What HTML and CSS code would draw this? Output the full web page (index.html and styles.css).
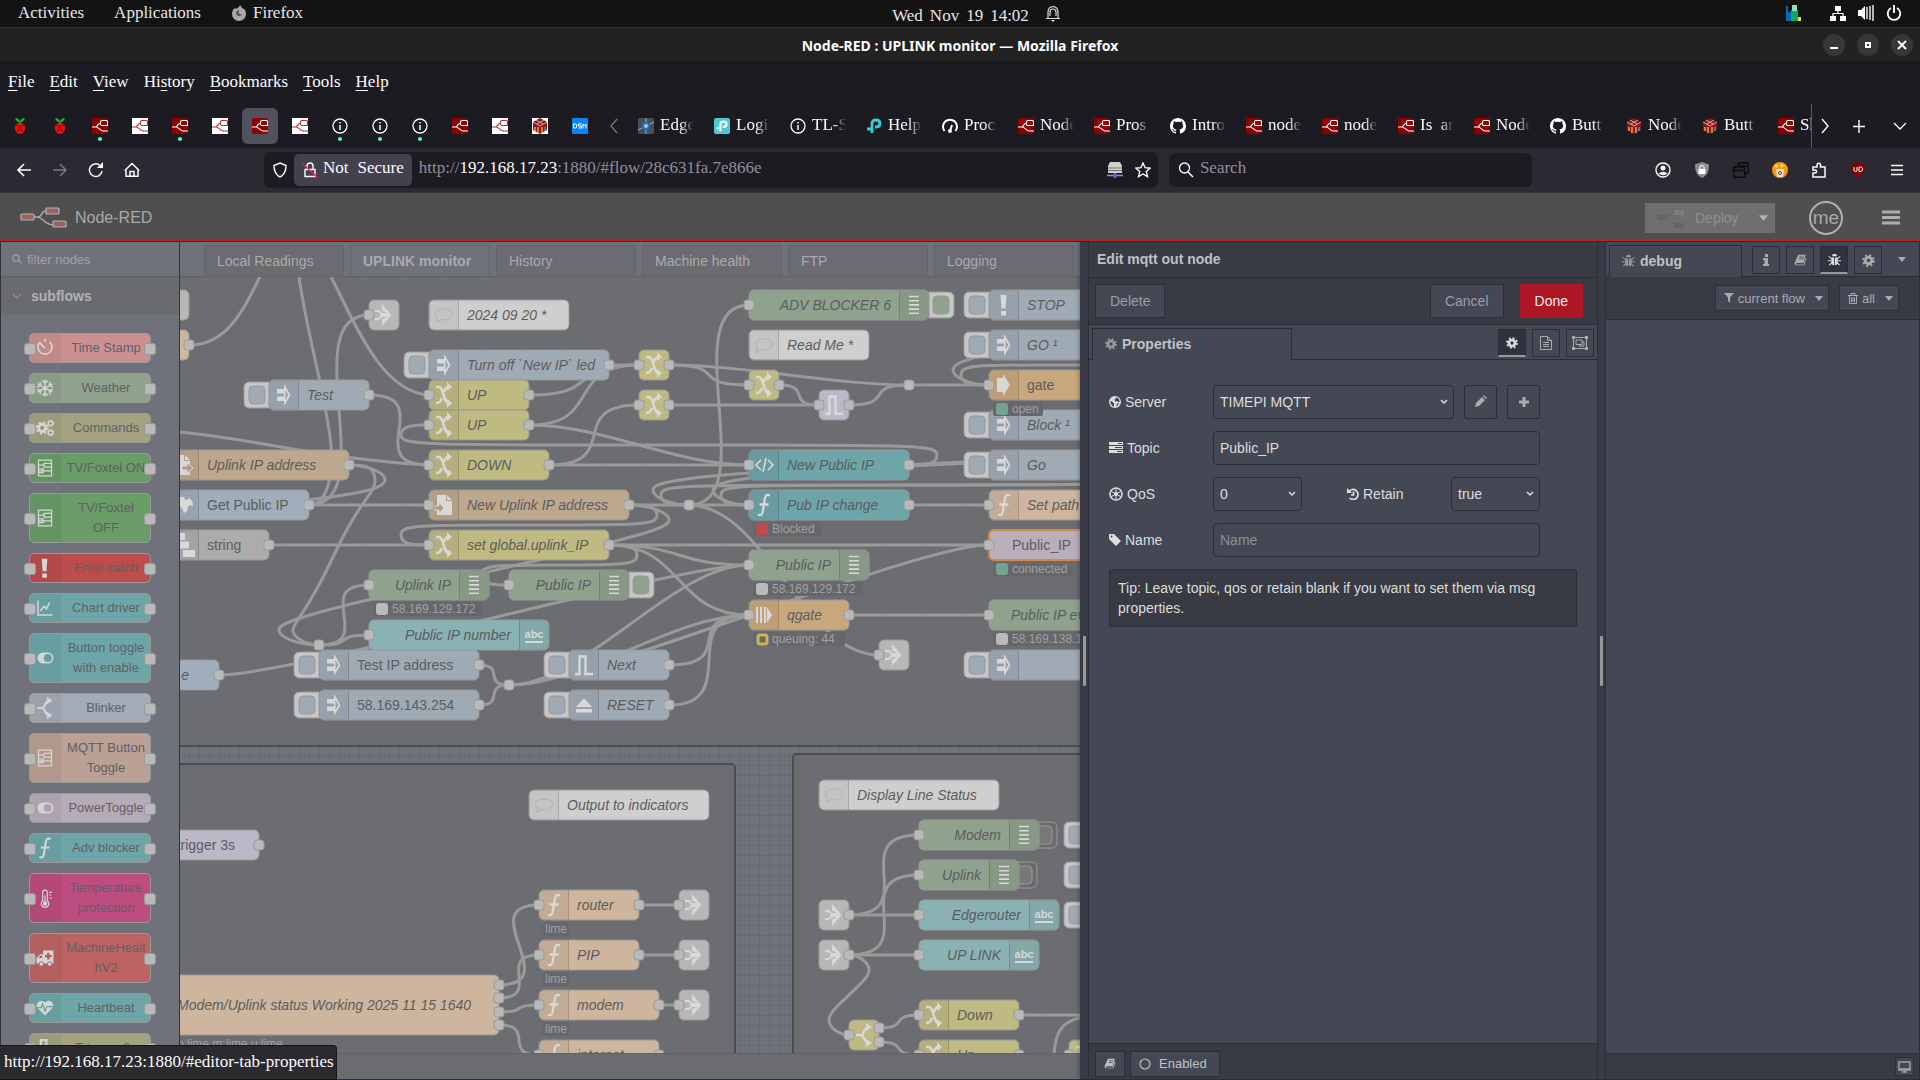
FILE: index.html
```html
<!DOCTYPE html>
<html lang="en">
<head>
    <meta charset="UTF-8">
    <meta name="viewport" content="width=device-width, initial-scale=1.0">
    <title>Node-RED : UPLINK monitor</title>
    <link rel="stylesheet" href="styles.css">
</head>
<body>
    <svg class="sprite" aria-hidden="true">
        <!-- browser icons -->
        <symbol id="pi" viewBox="0 0 16 16"><path d="M8 5C6 4 4 3 3 0c3 0 5 2 5 4 0-2 2-4 5-4-1 3-3 4-5 5z" fill="#1fb51f"/><path d="M8 5c3 0 5 2 5 5s-2 6-5 6-5-3-5-6 2-5 5-5z" fill="#f00f0f"/><circle cx="8" cy="10" r="2" fill="#900"/><path d="M4 8l2-1M12 8l-2-1M5 13l2 0M11 13l-2 0" stroke="#700" /></symbol>
        <symbol id="nr" viewBox="0 0 16 16"><rect width="16" height="16" rx="2" fill="#8f0000"/><g fill="none" stroke="#fff" stroke-width="1.1"><path d="M0 9h4c2-1 2-4 5-4M4 9c3 0 3 3 7 4h5"/><path d="M16 7.500h-6q-1.500 0-1.500-1.500V4q0-1.500 1.500-1.500h4q1.500 0 1.500 1.500v3"/></g></symbol>
        <symbol id="nrw" viewBox="0 0 16 16"><rect width="16" height="16" fill="#fff"/><g fill="none" stroke="#a33" stroke-width="1.1"><path d="M0 9h4c2-1 2-4 5-4M4 9c3 0 3 3 7 4h5"/><path d="M16 7.500h-6q-1.500 0-1.500-1.500V4q0-1.500 1.500-1.500h4q1.500 0 1.500 1.500v3"/></g></symbol>
        <symbol id="info" viewBox="0 0 16 16"><circle cx="8" cy="8" r="7" fill="none" stroke="#fbfbfe" stroke-width="1.3"/><path d="M8 7v5M8 4v1.600" stroke="#fbfbfe" stroke-width="1.500"/></symbol>
        <symbol id="box" viewBox="0 0 16 16"><path d="M8 0l7 4v8l-7 4-7-4V4z" fill="#8a1a1a"/><path d="M1 4l7 4 7-4M4 2l7 4M12 2L5 6" stroke="#e8a0a0" fill="none"/><path d="M3 9v4M6 9v6M10 9v6" stroke="#f0a040" stroke-width="1.500"/><path d="M13 9v4" stroke="#58d" stroke-width="1.500"/></symbol>
        <symbol id="dsm" viewBox="0 0 16 16"><rect width="16" height="16" rx="1" fill="#0a84ee"/><path d="M1.500 6h2q1 0 1 1v2q0 1-1 1h-2zM9.500 6h-3v2h3v2h-3M11 10.500V6l1.500 2L14 6v4.500" fill="none" stroke="#fff"/></symbol>
        <symbol id="edge" viewBox="0 0 16 16"><rect width="16" height="16" rx="2" fill="#4a4e56"/><circle cx="8" cy="8" r="4" fill="#2f6fb0"/><circle cx="8" cy="8" r="2" fill="#8cf"/><path d="M0 12l4-2M12 6l4-2M8 0v4M8 12v4" stroke="#6bf"/></symbol>
        <symbol id="tp" viewBox="0 0 16 16"><path d="M1 11h5V5q0-3 4-3t4 3.500-4 3.500H9M6 9v6" fill="none" stroke="currentColor" stroke-width="2.800"/></symbol>
        <symbol id="gauge" viewBox="0 0 16 16"><path d="M2.500 13a7 7 0 1 1 11 0M8 13l2-6" fill="none" stroke="#fff" stroke-width="2"/><circle cx="8" cy="13" r="2" fill="#fff"/></symbol>
        <symbol id="gh" viewBox="0 0 16 16"><path fill="#fff" d="M8 0C3.580 0 0 3.580 0 8c0 3.540 2.290 6.530 5.470 7.590.4.070.55-.17.55-.38 0-.19-.01-.82-.01-1.490-2.010.37-2.530-.49-2.690-.94-.09-.23-.48-.94-.82-1.130-.28-.15-.68-.52-.01-.53.63-.01 1.080.58 1.230.82.72 1.210 1.870.87 2.330.66.07-.52.28-.87.51-1.070-1.780-.2-3.640-.89-3.640-3.950 0-.87.31-1.590.82-2.150-.08-.2-.36-1.020.08-2.120 0 0 .67-.21 2.200.82.64-.18 1.320-.27 2-.27s1.360.09 2 .27c1.530-1.040 2.200-.82 2.200-.82.44 1.100.16 1.920.08 2.120.51.56.82 1.270.82 2.150 0 3.070-1.870 3.750-3.650 3.950.29.25.54.73.54 1.480 0 1.070-.01 1.930-.01 2.200 0 .21.15.46.55.38A8.010 8.010 0 0 0 16 8c0-4.420-3.580-8-8-8z"/></symbol>
        <!-- editor icons -->
        <symbol id="cog" viewBox="0 0 16 16"><circle cx="8" cy="8" r="4" fill="none" stroke="currentColor" stroke-width="3.600"/><circle cx="8" cy="8" r="6.600" fill="none" stroke="currentColor" stroke-width="2.400" stroke-dasharray="2.590 2.590"/></symbol>
        <symbol id="bug" viewBox="0 0 16 16"><path d="M5 4a3 3 0 0 1 6 0zM4 5.500h3.500V15C5 15 4 13 4 10zM12 5.500H8.500V15c2.500 0 3.500-2 3.500-5z" fill="currentColor"/><path d="M1 4l3 3M15 4l-3 3M0 9.500h4M16 9.500h-4M1.500 15L5 12M14.500 15L11 12" stroke="currentColor" stroke-width="1.300"/></symbol>
        <symbol id="book" viewBox="0 0 16 16"><path d="M5 1h10l-3 11H3q-1 0-1 1t1 1h9l3-9 1 1-3 9H3q-3 0-3-3z" fill="currentColor"/><path d="M6.500 4h6M6 6.500h6" stroke="#3c404b"/></symbol>
        <symbol id="caret" viewBox="0 0 10 6"><path d="M0 0h10L5 6z" fill="currentColor"/></symbol>
        <symbol id="search" viewBox="0 0 16 16"><circle cx="6.500" cy="6.500" r="5" fill="none" stroke="currentColor" stroke-width="2"/><path d="M10 10l5 5" stroke="currentColor" stroke-width="2"/></symbol>
        <symbol id="globe" viewBox="0 0 16 16"><circle cx="8" cy="8" r="8" fill="currentColor"/><path d="M9 1.500l4 2 1.500 4-2 .5-2-1.500-1.500 1L7 5l2-1zM2 6.500l3 1.500 2 2.500-1 4-2.500-2.500C2 10 1.500 8 2 6.500zM11 10l2.500-1-2 4-2 1z" fill="#434854"/></symbol>
        <!-- node icons, drawn on a 30x30 tile -->
        <symbol id="i-inject" viewBox="0 0 30 30"><path d="M8 9h7V4l6.500 11L15 26v-5H8v-4.500h7v-3H8z" fill="currentColor"/><path d="M16.500 10l3 5-3 5z" fill="#9aa4af"/></symbol>
        <symbol id="i-change" viewBox="0 0 30 30"><path d="M7 7h3c5 0 4 16 10 16M7 23c4 0 5-2 6-5M15 12c1-4 2-5 5-5" fill="none" stroke="currentColor" stroke-width="2.600"/><path d="M18 2l5 5-5 4zM18 19l5 4-5 5z" fill="currentColor"/></symbol>
        <symbol id="i-function" viewBox="0 0 30 30"><path d="M21 5.500c-4-2-5 1-5.500 5L14 20c-.500 5-2 6-5 4.500M10.500 14.500h9" fill="none" stroke="currentColor" stroke-width="2.300"/></symbol>
        <symbol id="i-comment" viewBox="0 0 30 30"><path d="M15 9c5 0 8.500 2.500 8.500 5.500S20 20 15 20c-1 0-2 0-3-.500C11 21 9 22 7 22c1-1 2-2 1.500-3.500C7 17 6.500 16 6.500 14.500 6.500 11.500 10 9 15 9z" fill="none" stroke="#b4b4b4" stroke-width="1.200"/></symbol>
        <symbol id="i-link" viewBox="0 0 30 30"><path d="M13 4l9.500 11L13 26v-6.500l5-2.500h-6v-4h6l-5-2.500z" fill="currentColor"/><path d="M6 11h2.500a4 4 0 0 1 0 8H6" fill="none" stroke="currentColor" stroke-width="2"/></symbol>
        <symbol id="i-debug" viewBox="0 0 30 30"><path d="M10 6.500h10M10 10.700h10M10 14.900h10M10 19.100h10M10 23.300h10" stroke="currentColor" stroke-width="1.600"/></symbol>
        <symbol id="i-bang" viewBox="0 0 30 30"><path d="M11.500 5h6l-1 13.500h-4zM12 21h5v4.500h-5z" fill="currentColor"/></symbol>
        <symbol id="i-arrow" viewBox="0 0 30 30"><path d="M8 8h6V4l7 11-7 11v-4H8z" fill="currentColor"/></symbol>
        <symbol id="i-queue" viewBox="0 0 30 30"><path d="M8 7v16M12 7v16M16 7v16" stroke="currentColor" stroke-width="2"/><path d="M18 7l5 8-5 8z" fill="currentColor"/></symbol>
        <symbol id="i-trigger" viewBox="0 0 30 30"><path d="M6 24h4.500V6.500h6V24H24" fill="none" stroke="currentColor" stroke-width="2.400"/></symbol>
        <symbol id="i-eject" viewBox="0 0 30 30"><path d="M15 8l8 9H7zM7 19h16v3.500H7z" fill="currentColor"/></symbol>
        <symbol id="i-code" viewBox="0 0 30 30"><path d="M12 10l-5 5 5 5M19 10l5 5-5 5M17 8l-3 14" fill="none" stroke="currentColor" stroke-width="1.600"/></symbol>
        <symbol id="i-filein" viewBox="0 0 30 30"><path d="M8 5h9v6h6v14H8zM18 5l5 5h-5z" fill="currentColor"/><path d="M5 16h5v-3.500l5 5.500-5 5.500V20H5z" fill="#b39a7f" stroke="currentColor"/></symbol>
        <symbol id="i-fileout" viewBox="0 0 30 30"><path d="M6 5h9v6h6v14H6zM16 5l5 5h-5z" fill="currentColor"/><path d="M13 16h5v-3.500l6 5.500-6 5.500V20h-5z" fill="#b39a7f" stroke="currentColor"/></symbol>
        <symbol id="i-globe" viewBox="0 0 30 30"><path d="M7 12c1-4 5-6 9-5l-1 2 3 1 2-2c3 2 4 5 4 8l-3-1-2 2-1 4-3 2-2-5-3-2-3-1z" fill="currentColor"/></symbol>
        <symbol id="i-list" viewBox="0 0 30 30"><path d="M8 3h8v7H8zM10 11.500h10v7H10zM14 20h12v7H14z" fill="currentColor"/></symbol>
        <symbol id="i-switch" viewBox="0 0 30 30"><path d="M7 15h5c3 0 3-8 8-8M12 15c3 0 3 8 8 8" fill="none" stroke="currentColor" stroke-width="2.400"/><path d="M17 3l6 4-6 4zM17 19l6 4-6 4z" fill="currentColor"/></symbol>
        <symbol id="i-clock" viewBox="0 0 30 30"><path d="M10 8.500a7.500 7.500 0 1 0 10 0M15 5v3M10 10l5 5" fill="none" stroke="currentColor" stroke-width="1.800"/></symbol>
        <symbol id="i-snow" viewBox="0 0 30 30"><path d="M15 6v18M7 10.500l16 9M7 19.500l16-9M12 7l3 3 3-3M12 23l3-3 3 3M6.500 14l4-1.500-1-4M23.500 14l-4-1.500 1-4M6.500 16.500l4 1.500-1 4M23.500 16.500l-4 1.500 1 4" fill="none" stroke="currentColor" stroke-width="1.500"/></symbol>
        <symbol id="i-cogs" viewBox="0 0 30 30"><circle cx="12" cy="15" r="3.800" fill="none" stroke="currentColor" stroke-width="3"/><circle cx="12" cy="15" r="6" fill="none" stroke="currentColor" stroke-width="2" stroke-dasharray="2.360 2.360"/><g fill="none" stroke="currentColor"><circle cx="21" cy="10" r="2.400" stroke-width="1.500"/><circle cx="21" cy="10" r="3.600" stroke-dasharray="1.410 1.410"/><circle cx="21" cy="20" r="2.400" stroke-width="1.500"/><circle cx="21" cy="20" r="3.600" stroke-dasharray="1.410 1.410"/></g></symbol>
        <symbol id="i-subflow" viewBox="0 0 30 30"><path d="M8 6.500h14v17H8zM8 12h6M18 10h-4v4h8v-4h-4M8 18h14M8 16h5v4H8" fill="none" stroke="currentColor" stroke-width="1.400"/></symbol>
        <symbol id="i-chart" viewBox="0 0 30 30"><path d="M7.500 7v15.500H23M10 18l4-5 2.500 3L20 9" fill="none" stroke="currentColor" stroke-width="1.700"/></symbol>
        <symbol id="i-toggle" viewBox="0 0 30 30"><path fill-rule="evenodd" d="M13 9h5a6 6 0 0 1 0 12h-5a6 6 0 0 1 0-12zM18 10.700a4.300 4.300 0 1 0 0 8.600 4.300 4.300 0 1 0 0-8.600z" fill="currentColor"/></symbol>
        <symbol id="i-thermo" viewBox="0 0 30 30"><path d="M12.500 18V9a2.500 2.500 0 0 1 5 0v9a4 4 0 1 1-5 0zM15 12v8M19.500 9h3M19.500 12h2M19.500 15h3" fill="none" stroke="currentColor" stroke-width="1.300"/><circle cx="15" cy="21" r="2.400" fill="currentColor"/></symbol>
        <symbol id="i-ambulance" viewBox="0 0 30 30"><path d="M13 7h11v14H6v-6l4-4h3zM8 15h4v-2.500h-2z" fill="currentColor" fill-rule="evenodd"/><path d="M18.500 9.500v7M15 13h7" stroke="#b95b5b" stroke-width="2.400"/><g fill="currentColor" stroke="#b95b5b"><circle cx="11" cy="21.500" r="2.400"/><circle cx="20" cy="21.500" r="2.400"/></g></symbol>
        <symbol id="i-heart" viewBox="0 0 30 30"><path d="M15 23l-8-8C4 10 10 4 15 9c5-5 11 1 8 6z" fill="currentColor"/><path d="M6 14.500h5l1.500-4 2.500 8 2-5h7" fill="none" stroke="#6ba0a4" stroke-width="1.300"/></symbol>
    </svg>

    <div class="desktop-bar">
        <div class="desktop-left"><span>Activities</span><span>Applications</span><span class="app">
            <svg width="16" height="16" viewBox="0 0 16 16"><path d="M8 2l1-2 2 3c3 1 4 3 4 6a7 7 0 0 1-14 0c0-3 1-5 3-6l1 1z" fill="#a8a8a8"/><path d="M8 5a3 3 0 1 0 3 4c-2 1-4 0-3-4z" fill="#555"/></svg>Firefox</span></div>
        <div class="clock"><span>Wed</span><span>Nov</span><span>19</span><span>14:02</span>
            <svg width="14" height="17" viewBox="0 0 14 17"><path d="M2 13V7q0-5 5-5.500 5 .500 5 5.500v6M0 13.500h14M4 11V7q0-3 3-3t3 3v4" fill="none" stroke="#ddd" stroke-width="1.200"/><path d="M5 15h4l-2 2z" fill="#ddd"/></svg></div>
        <div class="desktop-right">
            <svg class="load" width="16" height="16" viewBox="0 0 16 16"><path d="M0 1h2v6h3v9H0z" fill="#0a6ab0"/><path d="M5 5h7v11H5z" fill="#0aa860"/><path d="M6 0h5v6H6z" fill="#8fe0b8"/><path d="M12 12h3v4h-3z" fill="#f0e040"/></svg>
            <svg width="16" height="16" viewBox="0 0 16 16" fill="#fff"><path d="M5 1h6v5H5zM0 11h6v5H0zM10 11h6v5h-6z"/><path d="M8 6v3M3 11V8.500h10V11" fill="none" stroke="#fff" stroke-width="1.200"/></svg>
            <svg width="16" height="16" viewBox="0 0 16 16"><path d="M0 5h3l4-4v14l-4-4H0z" fill="#fff"/><path d="M9 2v12M12 1v14M15 0v16" stroke="#ddd" stroke-width="1.600"/></svg>
            <svg width="16" height="16" viewBox="0 0 16 16"><path d="M5 3a6.300 6.300 0 1 0 6 0M8 0v8" fill="none" stroke="#fff" stroke-width="1.900"/></svg>
        </div>
    </div>
    <div class="title-bar">
        <span>Node-RED : UPLINK monitor — Mozilla Firefox</span>
        <div class="win-buttons">
            <button aria-label="Minimize"><svg width="10" height="10" viewBox="0 0 10 10"><path d="M1 8h8" stroke="#fff" stroke-width="2"/></svg></button>
            <button aria-label="Maximize"><svg width="10" height="10" viewBox="0 0 10 10"><path d="M3 3h4v4H3z" fill="none" stroke="#fff" stroke-width="2"/></svg></button>
            <button aria-label="Close"><svg width="10" height="10" viewBox="0 0 10 10"><path d="M1 1l8 8M9 1L1 9" stroke="#fff" stroke-width="2"/></svg></button>
        </div>
    </div>
    <nav class="menu-bar">
        <span><u>F</u>ile</span><span><u>E</u>dit</span><span><u>V</u>iew</span><span>Hi<u>s</u>tory</span><span><u>B</u>ookmarks</span><span><u>T</u>ools</span><span><u>H</u>elp</span>
    </nav>
    <div class="tab-strip">
        <div class="pinned">
            <span class="pin"><svg><use href="#pi"/></svg></span>
            <span class="pin"><svg><use href="#pi"/></svg></span>
            <span class="pin dot"><svg><use href="#nr"/></svg></span>
            <span class="pin"><svg><use href="#nrw"/></svg></span>
            <span class="pin dot"><svg><use href="#nr"/></svg></span>
            <span class="pin"><svg><use href="#nrw"/></svg></span>
            <span class="pin current"><svg><use href="#nr"/></svg></span>
            <span class="pin"><svg><use href="#nrw"/></svg></span>
            <span class="pin dot"><svg><use href="#info"/></svg></span>
            <span class="pin dot"><svg><use href="#info"/></svg></span>
            <span class="pin dot"><svg><use href="#info"/></svg></span>
            <span class="pin"><svg><use href="#nr"/></svg></span>
            <span class="pin"><svg><use href="#nrw"/></svg></span>
            <span class="pin white"><svg><use href="#box"/></svg></span>
            <span class="pin"><svg><use href="#dsm"/></svg></span>
        </div>
        <svg class="scroll-left" viewBox="0 0 16 16"><path d="M11 1L5 8l6 7" fill="none" stroke="#77767d" stroke-width="1.300"/></svg>
        <div class="tabs">
            <span class="tab"><svg><use href="#edge"/></svg><b>Edge</b></span>
            <span class="tab"><svg class="tp-tile"><use href="#tp"/></svg><b>Login</b></span>
            <span class="tab"><svg><use href="#info"/></svg><b>TL-S</b></span>
            <span class="tab"><svg class="tp"><use href="#tp"/></svg><b>Help</b></span>
            <span class="tab"><svg><use href="#gauge"/></svg><b>Proc</b></span>
            <span class="tab"><svg><use href="#nr"/></svg><b>Node</b></span>
            <span class="tab"><svg><use href="#nr"/></svg><b>Pros</b></span>
            <span class="tab"><svg><use href="#gh"/></svg><b>Intro</b></span>
            <span class="tab"><svg><use href="#nr"/></svg><b>node</b></span>
            <span class="tab"><svg><use href="#nr"/></svg><b>node</b></span>
            <span class="tab"><svg><use href="#nr"/></svg><b>Is &nbsp;an</b></span>
            <span class="tab"><svg><use href="#nr"/></svg><b>Node</b></span>
            <span class="tab"><svg><use href="#gh"/></svg><b>Butt</b></span>
            <span class="tab"><svg><use href="#box"/></svg><b>Node</b></span>
            <span class="tab"><svg><use href="#box"/></svg><b>Butt</b></span>
            <span class="tab"><svg><use href="#nr"/></svg><b>Sh</b></span>
        </div>
        <div class="tab-tools">
            <svg viewBox="0 0 16 16"><path d="M5 1l6 7-6 7" fill="none" stroke="#fbfbfe" stroke-width="1.400"/></svg>
            <svg viewBox="0 0 16 16"><path d="M8 2v13M2 8.500h12" stroke="#fbfbfe" stroke-width="1.400"/></svg>
            <svg class="list-tabs" viewBox="0 0 16 16"><path d="M2 5l6 6 6-6" fill="none" stroke="#fbfbfe" stroke-width="1.400"/></svg>
        </div>
    </div>
    <div class="nav-bar">
        <div class="nav-buttons">
            <svg viewBox="0 0 16 16"><path d="M15 8H2M8 2L2 8l6 6" fill="none" stroke="#fbfbfe" stroke-width="1.600"/></svg>
            <svg viewBox="0 0 16 16"><path d="M1 8h13M8 2l6 6-6 6" fill="none" stroke="#7a7980" stroke-width="1.500"/></svg>
            <svg viewBox="0 0 16 16"><path d="M14 9A6.300 6.300 0 1 1 12 3.500" fill="none" stroke="#fbfbfe" stroke-width="1.500"/><path d="M15 0v6H9z" fill="#fbfbfe"/></svg>
            <svg viewBox="0 0 16 16"><path d="M2 8v6.200h12V8M.8 8.500L8 1.500l7.200 7M6 14V9.500h4V14" fill="none" stroke="#fbfbfe" stroke-width="1.500"/></svg>
        </div>
        <div class="url-bar">
            <svg viewBox="0 0 16 16"><path d="M8 1l6 2.500C14 9 12 13 8 15 4 13 2 9 2 3.500z" fill="none" stroke="#fbfbfe" stroke-width="1.400"/></svg>
            <span class="chip"><svg viewBox="0 0 16 16"><path d="M3 7.500h10v7H3zM5 7V4q0-3 3-3t3 3v3" fill="none" stroke="#fbfbfe" stroke-width="1.400"/><path d="M1 2l14 13" stroke="#e22850" stroke-width="1.500"/></svg><span>Not</span><span>Secure</span></span>
            <span class="url">http://<em>192.168.17.23</em>:1880/#flow/28c631fa.7e866e</span>
            <svg viewBox="0 0 16 16"><path d="M3 0h10l2 4v7H1V4z" fill="#d0d0d0"/><path d="M1 6h14M1 8.500h14" stroke="#777"/><path d="M0 13.500h16" stroke="#999" stroke-width="1.500"/><path d="M6.500 11h3v5h-3z" fill="#3a78e0"/></svg>
            <svg viewBox="0 0 16 16"><path d="M8 1l2.100 4.700 5 .500-3.800 3.400 1.200 5.100L8 12l-4.500 2.700 1.200-5.100L.9 6.200l5-.5z" fill="none" stroke="#fbfbfe" stroke-width="1.400"/></svg>
        </div>
        <label class="search-box"><svg viewBox="0 0 16 16"><circle cx="6.500" cy="6" r="5" fill="none" stroke="#fbfbfe" stroke-width="1.400"/><path d="M10 10l5 5" stroke="#fbfbfe" stroke-width="1.500"/></svg><input type="text" placeholder="Search" aria-label="Search"></label>
        <div class="ext-buttons">
            <svg viewBox="0 0 16 16"><circle cx="8" cy="8" r="7" fill="none" stroke="#fbfbfe" stroke-width="1.400"/><circle cx="8" cy="6" r="2.500" fill="#fbfbfe"/><path d="M3.500 11.500Q8 8 12.500 11.500 8 15 3.500 11.500" fill="#fbfbfe"/></svg>
            <svg viewBox="0 0 16 16"><path d="M8 0l7 2.500c0 7-2 11-7 13.500C3 13.500 1 9.500 1 2.500z" fill="#8e8e92"/><path d="M4.500 7h7v5h-7z" fill="#fff"/><path d="M6 7V5q0-1.500 2-1.500T10 5v2" fill="none" stroke="#fff"/></svg>
            <svg viewBox="0 0 16 16"><path d="M5 1h10.500v10H12M5 1v3M5 4h10M.7 5h11v10.300H.7zM1 8.500h10" fill="none" stroke="#0c0c0d" stroke-width="1.400"/></svg>
            <svg viewBox="0 0 16 16"><circle cx="8" cy="8" r="8" fill="#f59a12"/><path d="M4 7h8l-1 8H5z" fill="#eadfc8"/><circle cx="4.500" cy="4" r="1.500" fill="#ffe08a"/><circle cx="10" cy="3.500" r="1.500" fill="#ffe08a"/><circle cx="8" cy="11" r="1.500" fill="none" stroke="#555"/></svg>
            <svg viewBox="0 0 16 16"><path d="M2 15V11h2q1.500 0 1.500-1.500T4 8H2V5h4V3q0-1.800 1.800-1.800T9.500 3v2H14v10z" fill="none" stroke="#fbfbfe" stroke-width="1.500"/></svg>
            <svg viewBox="0 0 16 16"><path d="M8 0q3 2 7 2c0 7-2 11-7 14C3 13 1 9 1 2q4 0 7-2z" fill="#800000"/><path d="M4 5v3q0 1.500 1.500 1.500T7 8V5M9 5h1.500q2 0 2 2.200t-2 2.300H9z" fill="none" stroke="#fff"/></svg>
            <svg viewBox="0 0 16 16"><path d="M2 3.500h12M2 8h12M2 12.500h12" stroke="#fbfbfe" stroke-width="1.400"/></svg>
        </div>
    </div>

    <header class="red-header">
        <svg width="47" height="22" viewBox="0 0 47 22"><path d="M14 10h3c7 0 3-6 9-6M17 10c7 0 6 8 17 8" fill="none" stroke="#a9a9a9" stroke-width="1.500"/><g fill="#9b6262" stroke="#b5b5b5" stroke-width="1.200"><rect x="1" y="7" width="13" height="6" rx="1"/><rect x="26" y="1" width="13" height="6" rx="1"/><rect x="33" y="14" width="13" height="6" rx="1"/></g></svg>
        <span class="brand">Node-RED</span>
        <button class="deploy"><svg width="28" height="20" viewBox="0 0 28 20"><path d="M0 7h10v5H0z" fill="#646464"/><path d="M17 2h10v5H17z" fill="#7d7d7d"/><path d="M17 15h10v5H17z" fill="#646464"/><path d="M10 9l7-5" stroke="#646464"/></svg>Deploy<svg class="car"><use href="#caret"/></svg></button>
        <span class="avatar">me</span>
        <svg class="burger" width="18" height="15" viewBox="0 0 18 15"><path d="M0 2h18M0 7.500h18M0 13h18" stroke="#adadad" stroke-width="3"/></svg>
    </header>

    <main class="editor">
        <aside class="palette">
            <div class="palette-search"><svg width="10" height="10"><use href="#search"/></svg><input type="text" placeholder="filter nodes" aria-label="filter nodes"></div>
            <h3 class="palette-head"><svg width="8" height="6" viewBox="0 0 8 6"><path d="M0 1l4 4 4-4" fill="none" stroke="#a0a1a3"/></svg>subflows</h3>
            <div class="palette-list">
                <div class="pnode stamp"><svg><use href="#i-clock"/></svg><span>Time Stamp</span></div>
                <div class="pnode sage"><svg><use href="#i-snow"/></svg><span>Weather</span></div>
                <div class="pnode olive"><svg><use href="#i-cogs"/></svg><span>Commands</span></div>
                <div class="pnode green"><svg><use href="#i-subflow"/></svg><span>TV/Foxtel&nbsp;ON</span></div>
                <div class="pnode green"><svg><use href="#i-subflow"/></svg><span>TV/Foxtel<br>OFF</span></div>
                <div class="pnode red"><svg><use href="#i-bang"/></svg><span>Error catch</span></div>
                <div class="pnode teal"><svg><use href="#i-chart"/></svg><span>Chart driver</span></div>
                <div class="pnode teal"><svg><use href="#i-toggle"/></svg><span>Button toggle with enable</span></div>
                <div class="pnode steel"><svg><use href="#i-switch"/></svg><span>Blinker</span></div>
                <div class="pnode clay"><svg><use href="#i-subflow"/></svg><span>MQTT Button Toggle</span></div>
                <div class="pnode mauve"><svg><use href="#i-toggle"/></svg><span>PowerToggle</span></div>
                <div class="pnode teal"><svg><use href="#i-function"/></svg><span>Adv blocker</span></div>
                <div class="pnode pink"><svg><use href="#i-thermo"/></svg><span>Temperature protection</span></div>
                <div class="pnode brick"><svg><use href="#i-ambulance"/></svg><span>MachineHealt<br>hV2</span></div>
                <div class="pnode teal"><svg><use href="#i-heart"/></svg><span>Heartbeat</span></div>
                <div class="pnode olive"><svg><use href="#i-trigger"/></svg><span>Trigger &nbsp;3s</span></div>
            </div>
        </aside>

        <section class="workspace">
            <div class="flow-tabs">
                <span>Local Readings</span><span class="current">UPLINK monitor</span><span>History</span><span>Machine health</span><span>FTP</span><span>Logging</span>
            </div>
            <svg class="canvas" id="canvas"></svg>
            <div class="workspace-footer"></div>
        </section>

        <div class="splitter"><i></i></div>
        <section class="tray">
            <h2>Edit mqtt out node</h2>
            <div class="tray-toolbar">
                <button class="btn">Delete</button>
                <button class="btn cancel">Cancel</button>
                <button class="btn done">Done</button>
            </div>
            <div class="side-tabs">
                <span class="side-tab wide"><svg width="12" height="12"><use href="#cog"/></svg>Properties</span>
                <button class="ico on" aria-label="Properties"><svg width="12" height="12"><use href="#cog"/></svg></button>
                <button class="ico" aria-label="Description"><svg width="12" height="14" viewBox="0 0 12 14"><path d="M.5.500h7l4 4v9H.500zM7.500.500v4h4M3 6.500h6M3 8.500h6M3 10.500h6" fill="none" stroke="currentColor"/></svg></button>
                <button class="ico" aria-label="Appearance"><svg width="16" height="14" viewBox="0 0 16 14"><path d="M1.500 1.500h13v11h-13zM4 4h6v4.500H4zM7 8.500V10h5V6h-2" fill="none" stroke="currentColor"/><path d="M0 0h3v3H0zM13 0h3v3h-3zM0 11h3v3H0zM13 11h3v3h-3z" fill="currentColor"/></svg></button>
            </div>
            <form class="tray-body">
                <div class="row">
                    <label for="server"><svg width="12" height="12"><use href="#globe"/></svg>Server</label>
                    <select id="server" class="grow"><option>TIMEPI MQTT</option></select>
                    <button type="button" class="sq" aria-label="Edit"><svg width="12" height="12" viewBox="0 0 12 12"><path d="M0 12l1-4 6-6 3 3-6 6zM8 1l1-1 3 3-1 1z" fill="currentColor"/></svg></button>
                    <button type="button" class="sq" aria-label="Add"><svg width="10" height="10" viewBox="0 0 10 10"><path d="M5 0v10M0 5h10" stroke="currentColor" stroke-width="3"/></svg></button>
                </div>
                <div class="row">
                    <label for="topic"><svg width="14" height="12" viewBox="0 0 14 12"><path d="M0 1.500h14M0 5.500h14M0 9.500h14" stroke="currentColor" stroke-width="3"/><path d="M9 1.500h4M6 5.500h7M8 9.500h5" stroke="#434854"/></svg>Topic</label>
                    <input id="topic" class="grow" type="text" value="Public_IP">
                </div>
                <div class="row">
                    <label for="qos"><svg width="14" height="14" viewBox="0 0 14 14"><circle cx="7" cy="7" r="6" fill="none" stroke="currentColor" stroke-width="1.600"/><circle cx="7" cy="7" r="2" fill="currentColor"/><path d="M7 2v10M2.500 4.500l9 5M2.500 9.500l9-5" stroke="currentColor"/></svg>QoS</label>
                    <select id="qos" class="short"><option>0</option></select>
                    <label for="retain" class="retain"><svg width="12" height="12" viewBox="0 0 12 12"><path d="M2 3.500A5 5 0 1 1 2.500 10M6.500 3.500V7H4" fill="none" stroke="currentColor" stroke-width="1.700"/><path d="M0 0v5h5z" fill="currentColor"/></svg>Retain</label>
                    <select id="retain" class="short"><option>true</option></select>
                </div>
                <div class="row">
                    <label for="name"><svg width="12" height="12" viewBox="0 0 12 12"><path d="M0 0h5l7 7-5 5-7-7zM1.500 2.500a1 1 0 1 0 2 0 1 1 0 1 0-2 0" fill="currentColor" fill-rule="evenodd"/></svg>Name</label>
                    <input id="name" class="grow" type="text" placeholder="Name">
                </div>
                <p class="tip">Tip: Leave topic, qos or retain blank if you want to set them via msg properties.</p>
            </form>
            <div class="tray-footer">
                <button class="foot-btn" aria-label="Help"><svg width="12" height="11"><use href="#book"/></svg></button>
                <button class="foot-btn"><svg width="12" height="12" viewBox="0 0 12 12"><circle cx="6" cy="6" r="5" fill="none" stroke="currentColor" stroke-width="1.200"/></svg>Enabled</button>
            </div>
        </section>

        <div class="splitter second"><i></i></div>
        <aside class="sidebar">
            <div class="side-tabs">
                <span class="side-tab"><svg width="13" height="13"><use href="#bug"/></svg>debug</span>
                <button class="ico" aria-label="Info"><svg width="6" height="12" viewBox="0 0 6 12"><path d="M2 0h3v3H2zM0 4h5v6h1v2H0v-2h1.500V6H0z" fill="currentColor"/></svg></button>
                <button class="ico" aria-label="Help"><svg width="13" height="12"><use href="#book"/></svg></button>
                <button class="ico on" aria-label="Debug"><svg width="13" height="13"><use href="#bug"/></svg></button>
                <button class="ico" aria-label="Config"><svg width="13" height="13"><use href="#cog"/></svg></button>
                <svg class="more" width="8" height="5"><use href="#caret"/></svg>
            </div>
            <div class="debug-toolbar">
                <button class="filter"><svg width="10" height="10" viewBox="0 0 10 10"><path d="M0 0h10L6 4.500V10L4 8V4.500z" fill="currentColor"/></svg>current flow<svg class="end" width="8" height="5"><use href="#caret"/></svg></button>
                <button class="filter"><svg width="10" height="11" viewBox="0 0 10 11"><path d="M0 2.500h10M3 2V.500h4V2M1.500 3v7.500h7V3M3.500 4.500V9M5 4.500V9M6.500 4.500V9" fill="none" stroke="currentColor"/></svg>all<svg class="end" width="8" height="5"><use href="#caret"/></svg></button>
            </div>
            <div class="debug-body"></div>
            <div class="debug-footer"><button aria-label="Open in new window"><svg width="13" height="12" viewBox="0 0 13 12"><path d="M1 1h11v8H1zM1 8h11M4 11h5M6.500 9v2" fill="none" stroke="#9da0a5" stroke-width="1.500"/></svg></button></div>
        </aside>
    </main>
    <div class="status-link">http://192.168.17.23:1880/#editor-tab-properties</div>
    <script src="flow.js"></script>
</body>
</html>
```
FILE: styles.css
```css
* {
    box-sizing: border-box;
}
body {
    margin: 0;
    height: 100vh;
    display: flex;
    flex-direction: column;
    overflow: hidden;
    background: #1c1b22;
    color: #fbfbfe;
    font: 17px "Liberation Serif", serif;
}
button, input, select {
    font: inherit;
    color: inherit;
    margin: 0;
}
button {
    padding: 0;
    border: 0;
    background: none;
}
svg {
    flex: none;
}
.sprite {
    position: absolute;
    width: 0;
    height: 0;
}

/* desktop */
.desktop-bar {
    height: 28px;
    flex: none;
    display: grid;
    grid-template-columns: 1fr auto 1fr;
    align-items: center;
    background: #131313;
    border-bottom: 1px solid #333;
    color: #e6e6e6;
    line-height: 24px;
}
.desktop-left {
    display: flex;
    gap: 30px;
    padding: 0 0 2px 18px;
}
.desktop-left .app {
    display: flex;
    align-items: center;
    gap: 6px;
}
.clock {
    display: flex;
    align-items: center;
    gap: 7px;
    padding: 4px 0 0 32px;
}
.clock svg {
    margin: -6px 0 0 10px;
}
.desktop-right {
    display: flex;
    justify-content: flex-end;
    gap: 12px;
    padding: 0 18px 2px 0;
}
.load {
    margin-right: 16px;
}
.title-bar {
    height: 35px;
    flex: none;
    display: flex;
    align-items: center;
    justify-content: center;
    background: #222;
    border-bottom: 1px solid #151515;
    position: relative;
    font: bold 14px "Noto Sans", sans-serif;
}
.win-buttons {
    position: absolute;
    right: 7px;
    top: 6px;
    display: flex;
    gap: 12px;
}
.win-buttons button {
    width: 22px;
    height: 22px;
    border-radius: 50%;
    background: #373737;
    display: flex;
    align-items: center;
    justify-content: center;
}
.menu-bar {
    height: 41px;
    flex: none;
    display: flex;
    gap: 15px;
    padding: 0 8px;
    line-height: 38px;
}
.menu-bar u {
    text-underline-offset: 3px;
}
.tab-strip {
    height: 44px;
    flex: none;
    display: flex;
    align-items: center;
}
.tab-strip svg {
    width: 16px;
    height: 16px;
}
.pinned {
    display: flex;
}
.pin {
    width: 36px;
    height: 36px;
    margin: 0 2px;
    border-radius: 6px;
    display: flex;
    align-items: center;
    justify-content: center;
    position: relative;
}
.pin.current {
    background: #52525e;
}
.pin.dot::after {
    content: "";
    position: absolute;
    left: 16px;
    bottom: 3px;
    width: 4px;
    height: 4px;
    border-radius: 50%;
    background: #54ffbd;
}
.pin.white svg {
    background: #fff;
}
.scroll-left {
    margin: 0 16px 0 6px;
}
.tabs {
    flex: 1;
    min-width: 0;
    display: flex;
    overflow: hidden;
    height: 44px;
    border-right: 1px solid #5b5a62;
}
.tab {
    flex: none;
    width: 76px;
    display: flex;
    align-items: center;
    gap: 6px;
}
.tab b {
    font-weight: normal;
    width: 34px;
    padding-bottom: 3px;
    overflow: hidden;
    white-space: nowrap;
    -webkit-mask-image: linear-gradient(90deg, #000 60%, transparent);
    mask-image: linear-gradient(90deg, #000 60%, transparent);
}
.tab .tp {
    color: #2fd0d8;
}
.tab .tp-tile {
    color: #fff;
    background: #4acbd6;
    border-radius: 2px;
    padding: 2px;
}
.tab-tools {
    display: flex;
    gap: 18px;
    padding: 0 12px 0 5px;
}
.list-tabs {
    margin-left: 7px;
}
.nav-bar {
    height: 45px;
    flex: none;
    display: flex;
    align-items: center;
    background: #2b2a33;
    border-bottom: 1px solid #38373f;
}
.nav-bar svg {
    width: 16px;
    height: 16px;
}
.nav-buttons {
    width: 264px;
    flex: none;
    display: flex;
    gap: 20px;
    padding-left: 16px;
}
.url-bar {
    flex: 896;
    height: 36px;
    display: flex;
    align-items: center;
    padding: 0 7px 0 8px;
    border-radius: 6px;
    background: #1c1b22;
}
.chip {
    height: 32px;
    margin: 0 7px 0 6px;
    padding: 0 8px;
    display: flex;
    align-items: center;
    gap: 5px;
    border-radius: 5px;
    background: #42414d;
}
.chip span + span {
    margin-left: 4px;
}
.chip span, .url {
    padding-bottom: 4px;
}
.url {
    flex: 1;
    color: #8f8f9a;
}
.url em {
    font-style: normal;
    color: #fbfbfe;
}
.url + svg {
    margin-right: 12px;
}
.search-box {
    flex: 361;
    height: 34px;
    margin-left: 11px;
    display: flex;
    align-items: center;
    gap: 6px;
    padding-left: 9px;
    border-radius: 6px;
    background: #1c1b22;
}
.search-box input {
    flex: 1;
    min-width: 0;
    border: 0;
    padding: 0 0 4px;
    background: none;
}
.search-box input::placeholder {
    color: #8f8f9a;
}
.ext-buttons {
    width: 388px;
    flex: none;
    display: flex;
    justify-content: flex-end;
    gap: 23px;
    padding-right: 15px;
}

/* node-red header */
.red-header {
    height: 48px;
    flex: none;
    display: flex;
    align-items: center;
    padding: 3px 20px 0;
    background: #4f4f4f;
    border-bottom: 2px solid #c02020;
    color: #a9a9a9;
    font: 16px "Liberation Sans", Arial, sans-serif;
}
.brand {
    flex: 1;
    padding: 1px 0 0 8px;
}
.deploy {
    width: 130px;
    height: 30px;
    display: flex;
    align-items: center;
    gap: 10px;
    padding-left: 12px;
    background: #6f6f6f;
    color: #8f8f8f;
    font-size: 14px;
}
.deploy .car {
    width: 9px;
    height: 6px;
    margin-left: 10px;
    color: #b4b4b4;
}
.avatar {
    width: 34px;
    height: 34px;
    margin: 0 39px 0 34px;
    border: 2px solid #b0b0b0;
    border-radius: 50%;
    text-align: center;
    font-size: 19px;
    line-height: 29px;
}

.editor {
    flex: 1;
    min-height: 0;
    display: flex;
    border-top: 1px solid #2b2e38;
    border-bottom: 1px solid #2b2e38;
    background: #383b45;
    font: 14px "Liberation Sans", Arial, sans-serif;
}

/* palette */
.palette {
    width: 180px;
    flex: none;
    overflow: hidden;
    border: solid #30333b;
    border-width: 0 1px;
    background: #70727b;
    color: #a0a1a3;
}
.palette-search {
    height: 35px;
    display: flex;
    align-items: center;
    gap: 5px;
    padding-left: 11px;
    border-bottom: 1px solid #626367;
}
.palette-search input {
    width: 140px;
    padding: 0;
    border: 0;
    background: none;
    font-size: 13px;
}
.palette-search input::placeholder {
    color: #a0a1a3;
}
.palette-head {
    height: 38px;
    margin: 0;
    display: flex;
    align-items: center;
    gap: 10px;
    padding-left: 12px;
    background: #6a6b6f;
    color: #b0b1b2;
    font-size: 14px;
}
.palette-list {
    display: flex;
    flex-direction: column;
    gap: 10px;
    padding: 18px 28px 0;
}
.pnode {
    flex: none;
    display: flex;
    align-items: center;
    min-height: 30px;
    position: relative;
    border: 1px solid #999;
    border-radius: 5px;
    color: #606163;
    font-size: 13px;
    line-height: 20px;
    text-align: center;
    background-image: linear-gradient(90deg, rgba(0, 0, 0, .05) 30px, rgba(0, 0, 0, .15) 30px, transparent 31px);
}
.pnode svg {
    width: 30px;
    height: 28px;
    color: #d5d5d5;
}
.pnode span {
    flex: 1;
    padding: 4px 0 4px 2px;
}
.pnode::before, .pnode::after {
    content: "";
    position: absolute;
    top: calc(50% - 5px);
    width: 10px;
    height: 10px;
    border: 1px solid #999;
    border-radius: 3px;
    background: #b9b9b9;
}
.pnode::before {
    left: -6px;
}
.pnode::after {
    right: -6px;
}
.stamp { background-color: #cc9090; }
.sage { background-color: #90a28e; }
.olive { background-color: #a3a381; }
.green { background-color: #699c67; }
.red { background-color: #bc4d4d; }
.teal { background-color: #6ea5a9; }
.steel { background-color: #a2abb7; }
.clay { background-color: #baa095; }
.mauve { background-color: #b7abb7; }
.pink { background-color: #bd4c80; }
.brick { background-color: #bd6463; }

/* workspace */
.workspace {
    flex: 1;
    min-width: 0;
    display: flex;
    flex-direction: column;
    background: #6b6c70;
}
.flow-tabs {
    height: 35px;
    flex: none;
    display: flex;
    align-items: flex-end;
    gap: 6px;
    padding-left: 24px;
    overflow: hidden;
    background: #70727b;
    border-bottom: 1px solid #626367;
    color: #a9aaab;
}
.flow-tabs span {
    width: 140px;
    flex: none;
    height: 31px;
    padding-left: 12px;
    border: 1px solid #626468;
    border-bottom: 0;
    background: #6b6c70;
    line-height: 30px;
}
.flow-tabs .current {
    background: #70727b;
    font-weight: bold;
}
.canvas {
    flex: 1;
    width: 100%;
    min-height: 0;
    background: #70727b;
}
.workspace-footer {
    height: 26px;
    flex: none;
    border-top: 1px solid #626367;
}
.grid-line { stroke: #686a72; fill: none; }
.group { fill: #6b6c70; fill-opacity: .94; stroke: #4b4c4e; stroke-width: 2; }
.wire { fill: none; stroke: #999a9a; stroke-width: 3; }
.port { fill: #b9b9b9; stroke: #999; }
.body { stroke: #999; }
.body.selected { stroke: #d0874b; stroke-width: 2; }
.shade { fill: #000; fill-opacity: .05; }
.divider { stroke: #000; stroke-opacity: .15; }
.glyph { color: #d8d8d8; }
.label { fill: #5c5d5f; font-size: 14px; }
.italic { font-style: italic; }
.right { text-anchor: end; }
.abc { fill: #d8d8d8; font-size: 11px; font-weight: bold; text-anchor: middle; }
.button { fill: #c6c6c6; stroke: #999; }
.button.off { fill: #6b6c70; }
.status-bg { fill: #66676b; }
.status-text { fill: #a0a1a1; font-size: 12px; }

/* edit tray */
.splitter {
    width: 9px;
    flex: none;
    display: flex;
    align-items: center;
    justify-content: center;
    background: #383b45;
    border-right: 1px solid #2b2e38;
    box-shadow: -1px 0 4px rgba(0, 0, 0, .3);
}
.splitter i {
    width: 3px;
    height: 50px;
    border-radius: 1px;
    background: #999;
}
.splitter.second {
    border-left: 1px solid #2b2e38;
    box-shadow: none;
}
.tray {
    width: 508px;
    flex: none;
    display: flex;
    flex-direction: column;
    background: #434854;
    color: #ddd;
}
.tray h2 {
    height: 36px;
    flex: none;
    margin: 0;
    padding-left: 8px;
    border-bottom: 1px solid #2b2e38;
    background: #383b44;
    color: #c0c1c3;
    font-size: 14px;
    line-height: 34px;
}
.tray-toolbar {
    height: 47px;
    flex: none;
    display: flex;
    align-items: center;
    padding: 0 14px 0 6px;
    border-bottom: 1px solid #2b2e38;
    background: #383b44;
}
.btn {
    height: 34px;
    padding: 0 14px;
    border: 1px solid #2b2e38;
    background: #434854;
    color: #9b9da2;
}
.btn.cancel {
    margin-left: auto;
    margin-right: 16px;
}
.btn.done {
    border-color: #ad1625;
    background: #ad1625;
    color: #eee;
}
.side-tabs {
    height: 35px;
    flex: none;
    display: flex;
    align-items: flex-end;
    gap: 6px;
    padding: 0 3px;
    border-bottom: 1px solid #2b2e38;
    background: #434854;
}
.side-tab {
    width: 133px;
    height: 32px;
    margin: 0 auto -1px 0;
    display: flex;
    align-items: center;
    gap: 5px;
    padding: 0 0 2px 12px;
    border: 1px solid #2b2e38;
    border-bottom: 0;
    background: #434854;
    color: #c0c1c3;
    font-weight: bold;
}
.side-tab.wide {
    width: 200px;
}
.side-tab svg {
    color: #999;
}
.ico {
    width: 28px;
    height: 28px;
    margin-bottom: 2px;
    display: flex;
    align-items: center;
    justify-content: center;
    border: 1px solid #2b2e38;
    color: #aaa;
}
.ico.on {
    background: #30333d;
    border-bottom: 2px solid #999;
    color: #ddd;
}
.more {
    margin: 0 10px 14px;
    color: #aaa;
}
.tray-body {
    flex: 1;
    padding: 25px 20px 0;
}
.row {
    width: 431px;
    height: 34px;
    margin-bottom: 12px;
    display: flex;
    align-items: stretch;
    gap: 10px;
}
.row label {
    width: 94px;
    flex: none;
    display: flex;
    align-items: center;
    gap: 4px;
}
.row .retain {
    margin-left: auto;
}
.row input, .row select {
    min-width: 0;
    height: 34px;
    padding: 0 6px;
    border: 1px solid #2b2e38;
    border-radius: 4px;
    background: #434854;
    appearance: none;
}
.row input::placeholder {
    color: #8b8e95;
}
.row select {
    background: #434854 url("data:image/svg+xml,%3Csvg xmlns='http://www.w3.org/2000/svg' width='8' height='6'%3E%3Cpath d='M1 1l3 3 3-3' fill='none' stroke='%23ddd' stroke-width='1.500'/%3E%3C/svg%3E") no-repeat right 5px center;
}
.grow {
    flex: 1;
}
.row .short {
    width: 89px;
}
.sq {
    width: 33px;
    border: 1px solid #2b2e38;
    border-radius: 2px;
    color: #aaa;
}
.tip {
    margin: 0;
    padding: 8px;
    border: 1px solid #2b2e38;
    border-radius: 2px;
    background: #383b44;
    line-height: 20px;
}
.tray-footer {
    height: 36px;
    flex: none;
    display: flex;
    align-items: center;
    gap: 5px;
    padding: 4px 0 0 6px;
    border-top: 1px solid #2b2e38;
    background: #383b44;
}
.foot-btn {
    height: 26px;
    min-width: 30px;
    padding: 0 8px;
    display: flex;
    align-items: center;
    gap: 8px;
    border: 1px solid #2b2e38;
    background: #434854;
    color: #bfc0c3;
    font-size: 13px;
}
.foot-btn + .foot-btn {
    padding-right: 12px;
}

/* debug sidebar */
.sidebar {
    width: 314px;
    flex: none;
    display: flex;
    flex-direction: column;
    border-right: 1px solid #2b2e38;
    background: #434854;
}
.debug-toolbar {
    height: 43px;
    flex: none;
    display: flex;
    justify-content: flex-end;
    gap: 10px;
    padding: 8px 20px;
    border-bottom: 1px solid #2b2e38;
    background: #383b44;
}
.filter {
    height: 26px;
    display: flex;
    align-items: center;
    gap: 4px;
    padding: 0 5px 0 8px;
    border: 1px solid #2b2e38;
    background: #434854;
    color: #aaa;
    font-size: 13px;
}
.filter .end {
    margin-left: 6px;
}
.debug-body {
    flex: 1;
}
.debug-footer {
    height: 26px;
    flex: none;
    display: flex;
    align-items: center;
    justify-content: flex-end;
    padding-right: 5px;
    border-top: 1px solid #2b2e38;
    background: #383b44;
}
.debug-footer button {
    width: 19px;
    height: 19px;
    border: 1px solid #2b2e38;
    background: #434854;
    display: flex;
    align-items: center;
    justify-content: center;
}
.status-link {
    position: absolute;
    left: 0;
    bottom: 0;
    height: 35px;
    padding: 0 2px 0 4px;
    border: 1px solid #151515;
    border-left: 0;
    border-radius: 0 4px 0 0;
    background: #2b2a2e;
    line-height: 31px;
}
```
FILE: flow.js
```js
const canvas = document.getElementById('canvas');
const NODE_W = 100;
const NODE_H = 30;
// scroll position of the flow inside the workspace
const SCROLL_X = 180;
const SCROLL_Y = 277;

const C = {
    inject: '#a0aab5', change: '#bfba82', func: '#ceb59d', file: '#bda88e', debug: '#8fa28d',
    teal: '#6ea5a9', ui: '#8ab1b4', link: '#b7b7b7', comment: '#cfcfcf', gate: '#c9a77c',
    mqtt: '#baaebb', trigger: '#bcb8c7', request: '#a0adba'
};

// x, y (middle), width, colour, icon, label, options
const nodes = [
    [99, 305, 90, C.link, '', ''],
    [99, 345, 90, C.func, '', '', { out: 1 }],
    [369, 315, 30, C.link, 'link', '', { in: 1 }],
    [429, 315, 140, C.comment, 'comment', '2024 09 20 *', { it: 1 }],
    [429, 365, 180, C.inject, 'inject', 'Turn off `New IP` led', { it: 1, out: 1, btn: 'l' }],
    [429, 395, 100, C.change, 'change', 'UP', { it: 1, in: 1, out: 1 }],
    [429, 425, 100, C.change, 'change', 'UP', { it: 1, in: 1, out: 1 }],
    [269, 395, 100, C.inject, 'inject', 'Test', { it: 1, out: 1, btn: 'l' }],
    [429, 465, 120, C.change, 'change', 'DOWN', { it: 1, in: 1, out: 1 }],
    [169, 465, 180, C.file, 'fileout', 'Uplink IP address', { it: 1, out: 1 }],
    [169, 505, 140, C.request, 'globe', 'Get Public IP', { out: 1 }],
    [169, 545, 100, '#acacac', 'list', 'string', { out: 1 }],
    [429, 505, 200, C.file, 'filein', 'New Uplink IP address', { it: 1, in: 1, out: 1 }],
    [429, 545, 180, C.change, 'change', 'set global.uplink_IP', { it: 1, in: 1, out: 1 }],
    [369, 585, 120, C.debug, 'debug', 'Uplink IP', { it: 1, in: 1, r: 1, st: ['#b9b9b9', '58.169.129.172'] }],
    [509, 585, 120, C.debug, 'debug', 'Public IP', { it: 1, in: 1, r: 1, btn: 'r' }],
    [369, 635, 180, C.ui, 'abc', 'Public IP number', { it: 1, in: 1, r: 1 }],
    [99, 675, 120, C.request, '', '', { out: 1 }],
    [319, 665, 160, C.inject, 'inject', 'Test IP address', { out: 1, btn: 'l' }],
    [319, 705, 160, C.inject, 'inject', '58.169.143.254', { out: 1, btn: 'l' }],
    [569, 665, 100, C.inject, 'trigger', 'Next', { it: 1, out: 1, btn: 'l' }],
    [569, 705, 100, C.inject, 'eject', 'RESET', { it: 1, out: 1, btn: 'l' }],
    [639, 365, 30, C.change, 'change', '', { in: 1, out: 1 }],
    [639, 405, 30, C.change, 'change', '', { in: 1, out: 1 }],
    [749, 305, 180, C.debug, 'debug', 'ADV BLOCKER 6', { it: 1, in: 1, r: 1, btn: 'r' }],
    [749, 345, 120, C.comment, 'comment', 'Read Me *', { it: 1 }],
    [749, 385, 30, C.change, 'change', '', { in: 1, out: 1 }],
    [819, 405, 30, C.trigger, 'trigger', '', { in: 1, out: 1 }],
    [749, 465, 160, C.teal, 'code', 'New Public IP', { it: 1, in: 1, out: 1 }],
    [749, 505, 160, C.teal, 'function', 'Pub IP change', { it: 1, in: 1, out: 1, st: ['#bc4d4d', 'Blocked'] }],
    [749, 565, 120, C.debug, 'debug', 'Public IP', { it: 1, in: 1, r: 1, st: ['#b9b9b9', '58.169.129.172'] }],
    [749, 615, 100, C.gate, 'queue', 'qgate', { it: 1, in: 1, out: 1, st: ['ring', 'queuing: 44'] }],
    [879, 655, 30, C.link, 'link', '', { in: 1 }],
    [989, 305, 120, C.inject, 'bang', 'STOP', { it: 1, btn: 'l' }],
    [989, 345, 120, C.inject, 'inject', 'GO ¹', { it: 1, btn: 'l' }],
    [989, 425, 120, C.inject, 'inject', 'Block ¹', { it: 1, btn: 'l' }],
    [989, 385, 120, C.gate, 'arrow', 'gate', { in: 1, st: ['#75a38f', 'open'] }],
    [989, 465, 120, C.inject, 'inject', 'Go', { it: 1, btn: 'l' }],
    [989, 505, 120, C.func, 'function', 'Set path', { it: 1, in: 1 }],
    [989, 545, 120, C.mqtt, '', 'Public_IP', { in: 1, sel: 1, tx: 23, st: ['#75a38f', 'connected'] }],
    [989, 615, 160, C.debug, '', 'Public IP event', { it: 1, in: 1, tx: 22, st: ['#b9b9b9', '58.169.138.124'] }],
    [989, 665, 120, C.inject, 'inject', '', { btn: 'l' }],
    [99, 845, 160, C.trigger, '', 'trigger 3s', { out: 1, r: 1, rx: 24 }],
    [39, 1005, 460, C.func, '', 'Modem/Uplink status Working 2025 11 15 1640', { it: 1, h: 60, r: 1, rx: 28, outs: [985, 998, 1012, 1025] }],
    [529, 805, 180, C.comment, 'comment', 'Output to indicators', { it: 1 }],
    [539, 905, 100, C.func, 'function', 'router', { it: 1, in: 1, out: 1, st: ['', 'lime'] }],
    [539, 955, 100, C.func, 'function', 'PIP', { it: 1, in: 1, out: 1, st: ['', 'lime'] }],
    [539, 1005, 120, C.func, 'function', 'modem', { it: 1, in: 1, out: 1, st: ['', 'lime'] }],
    [539, 1055, 120, C.func, 'function', 'internet', { it: 1, in: 1, out: 1 }],
    [679, 905, 30, C.link, 'link', '', { in: 1 }],
    [679, 955, 30, C.link, 'link', '', { in: 1 }],
    [679, 1005, 30, C.link, 'link', '', { in: 1 }],
    [819, 795, 180, C.comment, 'comment', 'Display Line Status', { it: 1 }],
    [819, 915, 30, C.link, 'link', '', { out: 1 }],
    [819, 955, 30, C.link, 'link', '', { out: 1 }],
    [919, 835, 120, C.debug, 'debug', 'Modem', { it: 1, in: 1, r: 1, btn: 'off' }],
    [919, 875, 100, C.debug, 'debug', 'Uplink', { it: 1, in: 1, r: 1, btn: 'off' }],
    [919, 915, 140, C.ui, 'abc', 'Edgerouter', { it: 1, in: 1, r: 1 }],
    [919, 955, 120, C.ui, 'abc', 'UP LINK', { it: 1, in: 1, r: 1 }],
    [1089, 835, 100, C.inject, 'inject', '', { btn: 'l' }],
    [1089, 875, 100, C.inject, 'inject', '', { btn: 'l' }],
    [1089, 915, 100, C.inject, 'inject', '', { btn: 'l' }],
    [849, 1035, 30, C.change, 'switch', '', { in: 1, outs: [1028, 1042] }],
    [919, 1015, 100, C.change, 'change', 'Down', { it: 1, in: 1, out: 1 }],
    [919, 1055, 100, C.change, 'change', 'Up', { it: 1, in: 1, out: 1 }],
    [1069, 1055, 30, C.change, 'change', '', { in: 1 }]
];

const junctions = [[319, 645], [509, 685], [689, 505], [909, 385]];

const wires = [
    [189, 345, 330, 210], [309, 505, 369, 315], [309, 505, 429, 505], [269, 545, 429, 545],
    [369, 395, 429, 465], [349, 465, 319, 645], [349, 465, 169, 545],
    [609, 365, 639, 365], [529, 395, 639, 365], [529, 425, 639, 365], [529, 425, 749, 465],
    [549, 465, 639, 405], [549, 465, 749, 465], [909, 465, 429, 425], [909, 465, 1200, 450],
    [669, 365, 909, 385], [669, 365, 749, 385], [669, 405, 819, 405], [779, 385, 819, 405],
    [849, 405, 909, 385], [909, 385, 989, 385], [1109, 345, 989, 385], [1109, 305, 989, 385],
    [629, 505, 689, 505], [689, 505, 749, 505], [629, 505, 429, 545], [629, 505, 319, 645],
    [1109, 465, 689, 505], [1109, 425, 689, 505], [1109, 465, 749, 505], [1109, 425, 749, 505],
    [689, 505, 749, 305], [689, 505, 879, 655], [909, 505, 989, 505],
    [609, 545, 989, 545], [609, 545, 749, 565], [609, 545, 749, 615], [609, 545, 509, 585],
    [319, 645, 369, 585], [319, 645, 369, 635], [219, 675, 749, 565],
    [479, 665, 509, 685], [479, 705, 509, 685], [509, 685, 749, 565], [509, 685, 749, 615],
    [509, 685, 989, 545], [669, 665, 749, 615], [669, 705, 749, 615], [849, 615, 989, 615],
    [499, 985, 539, 905], [499, 998, 539, 955], [499, 1012, 539, 1005], [499, 1025, 539, 1055],
    [639, 905, 679, 905], [639, 955, 679, 955], [659, 1005, 679, 1005],
    [849, 915, 919, 835], [849, 915, 919, 915], [849, 955, 919, 875], [849, 955, 919, 955],
    [849, 955, 849, 1035], [879, 1028, 919, 1015], [879, 1042, 919, 1055], [1019, 1015, 1160, 1015]
];

// wires whose far end is scrolled out of view
const loosePaths = [
    'M309 505C325 505 334 480 331 445C326 395 308 340 299 277',
    'M331 277C354 320 380 392 429 395',
    'M180 432C260 440 330 460 429 465',
    'M1054 1060C1054 1035 1060 1020 1085 1017'
];

function wirePath(x1, y1, x2, y2) {
    const dx = x2 - x1, dy = y2 - y1;
    const delta = Math.hypot(dx, dy);
    if (dx > 0) {
        const s = (delta < NODE_W ? 0.75 * delta / NODE_W : 0.75) * NODE_W;
        return `M${x1} ${y1}C${x1 + s} ${y1} ${x2 - s} ${y2} ${x2} ${y2}`;
    }
    // going backwards: loop out of one side and into the other
    const near = Math.min(Math.abs(dx), Math.abs(dy));
    const s = (0.4 - 0.2 * Math.max(0, (NODE_W - near) / NODE_W)) * NODE_W;
    const half = NODE_H / 2, dir = dy > 0 ? 1 : -1;
    const down = dy > 0;
    const midX = Math.floor(x2 - dx / 2), midY = Math.floor(y2 - dy / 2);
    const q = (y2 + midY) / 2;
    const topX = x1 + s, botX = x2 - s;
    const topY = down ? Math.min(q - dy / 2, y1 + half) : Math.max(q - dy / 2, y1 - half);
    const botY = down ? Math.max(q, y2 - half) : Math.min(q, y2 + half);
    const cx = (x1 + topX) / 2;
    let c1 = down ? Math.max(y1, topY - half) : Math.min(y1, topY + half);
    const c2 = down ? Math.min(midY, topY + half) : Math.max(midY, topY - half);
    let c3 = down ? Math.max(midY, botY - half) : Math.min(midY, botY + half);
    if (c2 === topY + dir * half) {
        if (Math.abs(dy) < half * 10) c1 = topY - dir * half / 2;
        c3 = botY - dir * half / 2;
    }
    return `M${x1} ${y1}C${cx} ${y1} ${topX} ${c1} ${topX} ${topY}S${cx} ${c2} ${midX} ${midY}` +
        `S${botX} ${c3} ${botX} ${botY}S${(x2 + botX) / 2} ${y2} ${x2} ${y2}`;
}

function port(x, y) {
    return `<rect class="port" x="${x - 5}" y="${y - 5}" width="10" height="10" rx="3"/>`;
}

// side: 'l' and 'r' are live buttons, 'off' is a disabled one on the right
function button(side, x, y, w, color) {
    const off = side === 'off';
    const left = side === 'l' ? x - 25 : side === 'r' ? x + w - 7 : x + w - 14;
    const inner = left + (side === 'l' ? 5 : 11);
    return `<rect class="button ${off ? 'off' : ''}" x="${left}" y="${y - 13}" width="32" height="26" rx="5"/>` +
        `<rect x="${inner}" y="${y - 9}" width="16" height="18" rx="4" fill="${off ? '#777976' : color}" stroke="#999"/>`;
}

function drawNode([x, y, w, color, icon, label, o = {}]) {
    const h = o.h || 30, top = y - h / 2;
    let s = '';
    if (o.btn) s += button(o.btn, x, y, w, color);
    s += `<rect class="body ${o.sel ? 'selected' : ''}" x="${x}" y="${top}" width="${w}" height="${h}" rx="5" fill="${color}"/>`;
    if (icon) {
        const ix = o.r ? x + w - 30 : x;
        if (w > 30) {
            const line = o.r ? ix : ix + 29;
            s += `<rect class="shade" x="${ix}" y="${top}" width="30" height="30" rx="4"/><path class="divider" d="M${line + .5} ${top}v30"/>`;
        }
        if (icon === 'abc') s += `<text class="abc" x="${ix + 15}" y="${y + 3}">abc</text><path d="M${ix + 6} ${y + 7}h18" stroke="#d8d8d8" stroke-width="2"/>`;
        else s += `<use class="glyph" href="#i-${icon}" x="${ix}" y="${top}" width="30" height="30"/>`;
    }
    if (label) {
        const tx = o.r ? x + w - (o.rx || 38) : x + (o.tx || 38);
        s += `<text class="label ${o.it ? 'italic' : ''} ${o.r ? 'right' : ''}" x="${tx}" y="${y + 5}">${label}</text>`;
    }
    if (o.in) s += port(x, y);
    if (o.out) s += port(x + w, y);
    (o.outs || []).forEach(py => { s += port(x + w, py); });
    return s;
}

function drawStatus([x, y, w, color, icon, label, o = {}]) {
    if (!o.st) return '';
    const [dot, text] = o.st;
    const tx = dot ? x + 23 : x + 6;
    let s = `<rect class="status-bg" x="${x + 4}" y="${y + 17}" width="${text.length * 6 + (dot ? 26 : 2)}" height="14" rx="2"/>`;
    if (dot === 'ring') s += `<rect x="${x + 9}" y="${y + 20}" width="9" height="9" rx="2" fill="none" stroke="#c8b658" stroke-width="3"/>`;
    else if (dot) s += `<rect x="${x + 7}" y="${y + 18}" width="12" height="12" rx="3" fill="${dot}"/>`;
    return s + `<text class="status-text" x="${tx}" y="${y + 28}">${text}</text>`;
}

const html = [
    '<defs><pattern id="grid" width="10" height="10" patternUnits="userSpaceOnUse" x="9" y="5"><path class="grid-line" d="M0 .5H10M.5 0V10"/></pattern></defs>',
    `<g transform="translate(${-SCROLL_X} ${-SCROLL_Y})">`,
    '<rect x="180" y="277" width="3000" height="2000" fill="url(#grid)"/>',
    '<rect class="group" x="100" y="100" width="3000" height="646" rx="4"/>',
    '<rect class="group" x="100" y="764" width="635" height="600" rx="4"/>',
    '<rect class="group" x="793" y="754" width="2000" height="600" rx="4"/>',
    ...wires.map(w => `<path class="wire" d="${wirePath(...w)}"/>`),
    ...loosePaths.map(d => `<path class="wire" d="${d}"/>`),
    ...junctions.map(([x, y]) => port(x, y)),
    ...nodes.map(drawNode),
    ...nodes.map(drawStatus),
    '<text class="label italic right" x="189" y="680">e</text>',
    '<text class="status-text right" x="283" y="1048">p:lime m:lime u:lime</text>',
    '</g>'
];
canvas.innerHTML = html.join('');
```
